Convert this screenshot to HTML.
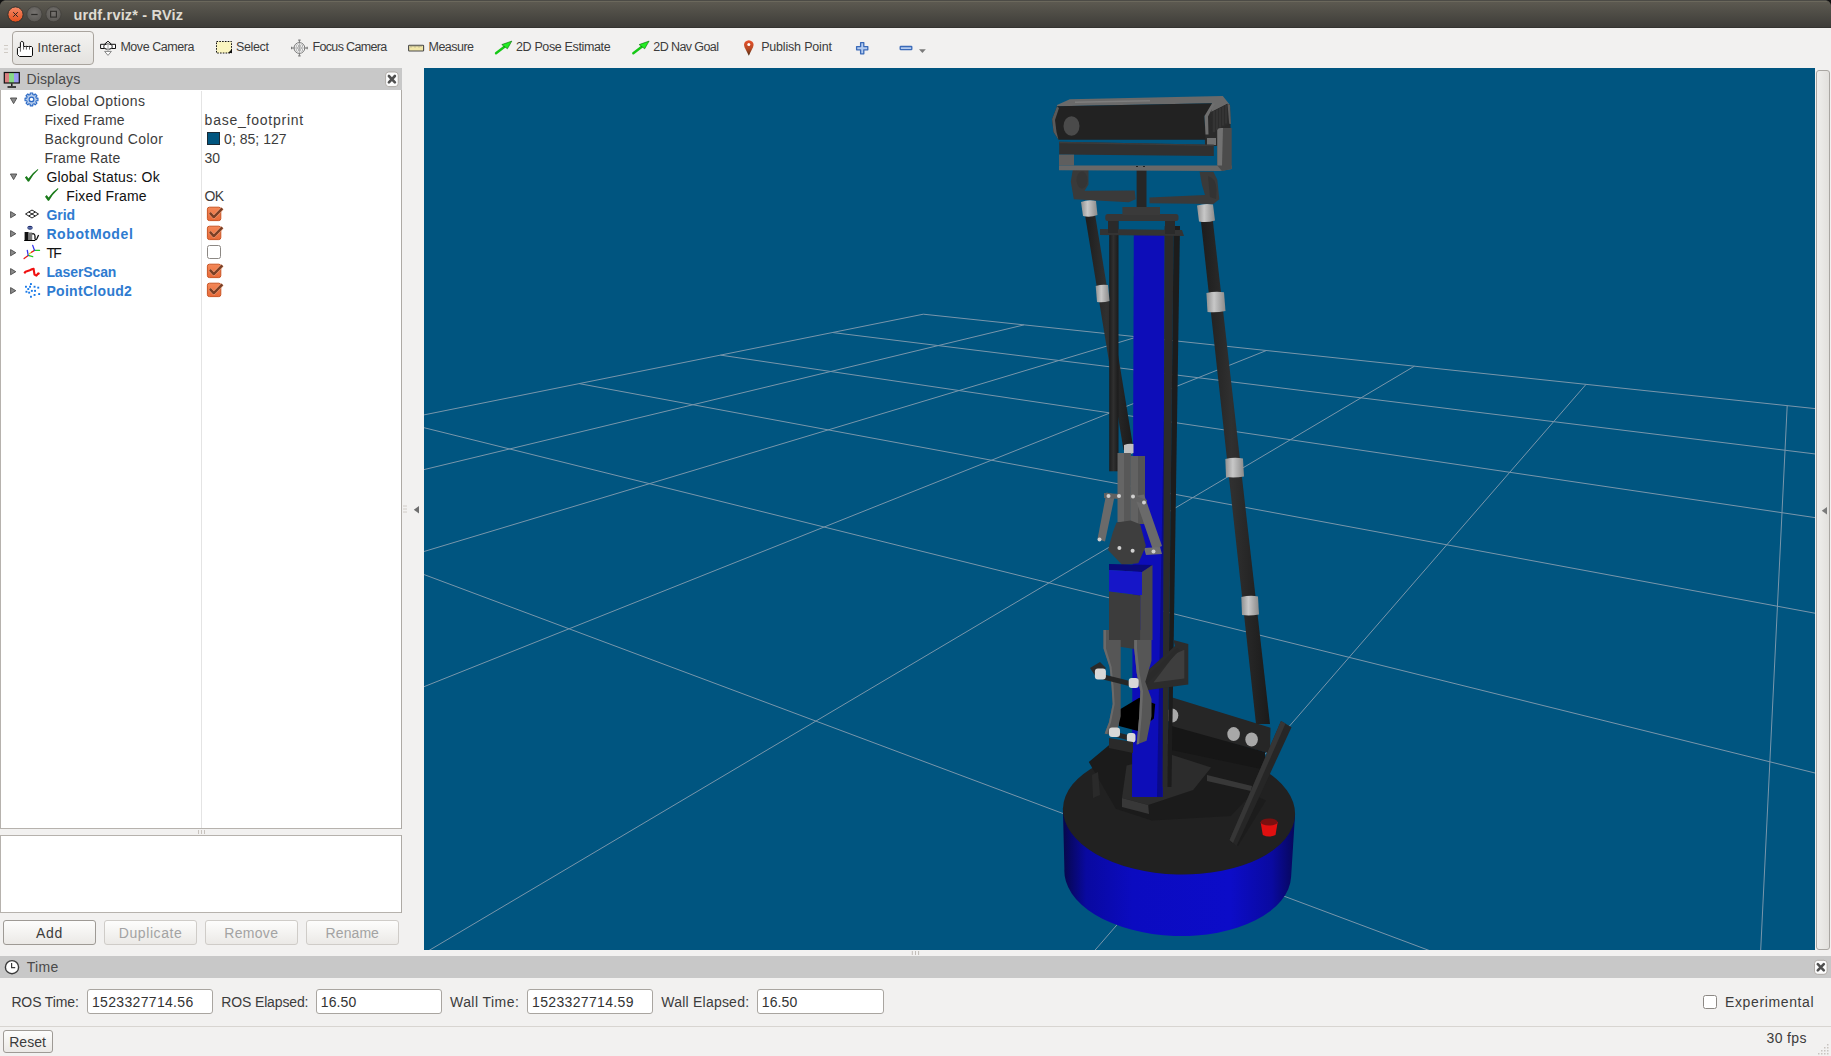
<!DOCTYPE html><html><head><meta charset="utf-8"><style>
html,body{margin:0;padding:0;}
body{width:1831px;height:1056px;position:relative;overflow:hidden;background:#f2f1f0;font-family:"Liberation Sans",sans-serif;}
.t{position:absolute;white-space:nowrap;line-height:1;}
.b{position:absolute;box-sizing:border-box;}
svg{position:absolute;}
</style></head><body>
<div class="b" style="left:0px;top:0px;width:1831px;height:28px;background:linear-gradient(#5d5a51 5%,#3e3d39 95%,#2f2e2b 100%);"></div>
<div class="b" style="left:0px;top:0px;width:1831px;height:1px;background:#4c4b46;"></div>
<svg style="left:0;top:0" width="1831" height="28"><path d="M0 0 H5 Q1 1 0 5Z" fill="#111"/><path d="M1831 0 H1826 Q1830 1 1831 5Z" fill="#111"/><path d="M4 1.5 H1827" stroke="#6b685c" stroke-width="1"/></svg>
<svg style="left:0;top:0" width="70" height="28">
<defs><linearGradient id="rc" x1="0" y1="0" x2="0" y2="1"><stop offset="0" stop-color="#f58a68"/><stop offset="1" stop-color="#e54f1c"/></linearGradient>
<radialGradient id="gc" cx="50%" cy="40%" r="60%"><stop offset="0" stop-color="#767370"/><stop offset="1" stop-color="#5a5854"/></radialGradient></defs>
<circle cx="15.5" cy="14.5" r="7.6" fill="url(#rc)" stroke="#2e2c28" stroke-width="0.9"/>
<path d="M13.2 12.2 L17.8 16.8 M17.8 12.2 L13.2 16.8" stroke="#2a2420" stroke-width="1"/>
<circle cx="34.4" cy="14.2" r="7.6" fill="url(#gc)" stroke="#3a3935" stroke-width="0.6"/>
<path d="M31.2 14.5 H37.6" stroke="#2e2d2a" stroke-width="1.2"/>
<circle cx="53.5" cy="14.2" r="7.6" fill="url(#gc)" stroke="#3a3935" stroke-width="0.6"/>
<rect x="50.6" y="11.3" width="5.8" height="5.8" fill="none" stroke="#2e2d2a" stroke-width="1.1"/>
</svg>
<div class="t" style="left:73.40px;top:7.63px;font-size:14.5px;letter-spacing:0.191px;color:#dfdbd2;font-weight:bold;">urdf.rviz* - RViz</div>
<div class="b" style="left:0px;top:28px;width:1831px;height:40px;background:#f2f1f0;"></div>
<svg style="left:0;top:28" width="12" height="40"><path d="M4 17.5H8M4 21H8M4 24.5H8" stroke="#cfcac4" stroke-width="1"/></svg>
<div class="b" style="left:12px;top:31px;width:82px;height:34px;border:1px solid #a9a49e;border-radius:4px;background:linear-gradient(#f4f3f1,#e4e2df);"></div>
<div class="t" style="left:37.50px;top:42.22px;font-size:12.5px;letter-spacing:0.186px;color:#3c3c3c;font-weight:normal;">Interact</div>
<div class="t" style="left:120.40px;top:41.32px;font-size:12.5px;letter-spacing:-0.455px;color:#3c3c3c;font-weight:normal;">Move Camera</div>
<div class="t" style="left:235.90px;top:41.32px;font-size:12.5px;letter-spacing:-0.330px;color:#3c3c3c;font-weight:normal;">Select</div>
<div class="t" style="left:312.50px;top:41.32px;font-size:12.5px;letter-spacing:-0.664px;color:#3c3c3c;font-weight:normal;">Focus Camera</div>
<div class="t" style="left:428.50px;top:41.32px;font-size:12.5px;letter-spacing:-0.525px;color:#3c3c3c;font-weight:normal;">Measure</div>
<div class="t" style="left:516.00px;top:41.32px;font-size:12.5px;letter-spacing:-0.357px;color:#3c3c3c;font-weight:normal;">2D Pose Estimate</div>
<div class="t" style="left:653.30px;top:41.32px;font-size:12.5px;letter-spacing:-0.595px;color:#3c3c3c;font-weight:normal;">2D Nav Goal</div>
<div class="t" style="left:761.20px;top:41.32px;font-size:12.5px;letter-spacing:-0.188px;color:#3c3c3c;font-weight:normal;">Publish Point</div>
<svg style="left:0;top:28" width="940" height="40">
<!-- hand -->
<g transform="translate(0,-28)">
<path d="M17.45 54.6 V48.5 L18.4 47.4 H20.4 V42.4 L21.8 41.3 L23.6 42.4 V46.5 H25.4 L26 46.2 L27 46.5 H28.5 L29 46.2 L30 46.5 H31.5 L32.5 47.6 V55.5 L31.3 56.5 H19.5 Z" fill="#fff" stroke="#0a0a0a" stroke-width="1" stroke-linejoin="round"/>
<path d="M20.4 47.4 V51.7 M23.6 46.5 V49.6 M26.4 46.7 V49.6 M29.5 46.7 V49.6" stroke="#333" stroke-width="0.8"/>
</g>
<!-- move camera -->
<g fill="#fff" stroke="#111" stroke-width="1">
<path d="M100.6 16.3 h4.2 v4.2 h-4.2z"/><path d="M111.3 16.3 h4.2 v4.2 h-4.2z"/>
<path d="M104.2 16.5 L108 13.2 L111.8 16.5"/>
<ellipse cx="108" cy="18.6" rx="4.2" ry="2.6"/>
</g>
<path d="M108 16 v8" stroke="#bbb" stroke-width="1.4"/>
<path d="M104.6 23.4 h6.8 l-3.4 4z" fill="#fff" stroke="#888" stroke-width="1"/>
<!-- select -->
<rect x="216.5" y="13.5" width="15" height="11.5" fill="#fbf5c0" stroke="#111" stroke-width="1" stroke-dasharray="1.6 1.2"/>
<path d="M228 25 L232 25 L232 21z" fill="#111"/>
<!-- focus camera -->
<g fill="none" stroke="#7a7a7a" stroke-width="1">
<circle cx="299.4" cy="20" r="5.4" fill="#fafafa"/>
<path d="M299.4 12.2 v3.2 M299.4 24.6 v3.2 M291.6 20 h3.2 M304 20 h3.2"/>
<path d="M299.4 15.6 v8.8 M295 20 h8.8" stroke="#999" stroke-width="0.8"/>
<circle cx="297.4" cy="18" r="1.3" stroke="#999" stroke-width="0.7"/><circle cx="301.4" cy="18" r="1.3" stroke="#999" stroke-width="0.7"/><circle cx="297.4" cy="22" r="1.3" stroke="#999" stroke-width="0.7"/><circle cx="301.4" cy="22" r="1.3" stroke="#999" stroke-width="0.7"/>
</g>
<path d="M298.2 12.2 h2.4 M298.2 27.8 h2.4 M291.6 18.8 v2.4 M307.2 18.8 v2.4" stroke="#7a7a7a" stroke-width="1.2"/>
<!-- measure -->
<rect x="408.6" y="17.2" width="15" height="5.8" rx="0.8" fill="#f1e6a8" stroke="#4a4a4a" stroke-width="1.1"/>
<path d="M411 17.6v1.8M413 17.6v1.2M415 17.6v1.8M417 17.6v1.2M419 17.6v1.8M421 17.6v1.2" stroke="#666" stroke-width="0.7"/>
<!-- 2D pose -->
<path d="M496 25.3 L504.5 18.7" stroke="#16c816" stroke-width="2.4" stroke-linecap="round"/><path d="M511.8 13.1 L501.8 16.6 L507.4 20.8 Z" fill="#22ee22" stroke="#0a6a0a" stroke-width="0.6" stroke-linejoin="round"/>
<path d="M633.3 25.3 L641.8 18.7" stroke="#16c816" stroke-width="2.4" stroke-linecap="round"/><path d="M649.1 13.1 L639.1 16.6 L644.7 20.8 Z" fill="#22ee22" stroke="#0a6a0a" stroke-width="0.6" stroke-linejoin="round"/>
<!-- publish point -->
<defs><linearGradient id="pin" x1="0" y1="0" x2="0" y2="1"><stop offset="0" stop-color="#e8502a"/><stop offset="0.55" stop-color="#b84a25"/><stop offset="1" stop-color="#4a2a12"/></linearGradient></defs>
<path d="M748.8 27.8 l-4.2-8.6 q-1.4-3.2 0.6-5.4 q3.6-3.2 7.2 0 q2 2.2 0.6 5.4z" fill="url(#pin)"/>
<circle cx="748.8" cy="16.6" r="1.5" fill="#fff"/>
<!-- plus -->
<path d="M860.6 14.6 h3.2 v4 h4 v3.2 h-4 v4 h-3.2 v-4 h-4 v-3.2 h4z" fill="#b4cbef" stroke="#3a6ab8" stroke-width="1.3" stroke-linejoin="round"/>
<!-- minus -->
<rect x="900.2" y="18.5" width="11.6" height="3.2" rx="0.6" fill="#b4cbef" stroke="#3a6ab8" stroke-width="1.3"/>
<path d="M919 21.2 h6.8 l-3.4 3.8z" fill="#7a7a7a"/>
</g>
</svg>
<div class="b" style="left:0px;top:68px;width:402px;height:23px;background:#c8c8c8;"></div>
<div class="t" style="left:26.50px;top:71.75px;font-size:14px;letter-spacing:0.114px;color:#4a4a4a;font-weight:normal;">Displays</div>
<svg style="left:0;top:68" width="402" height="23">
<defs><linearGradient id="mon" x1="0" x2="1"><stop offset="0" stop-color="#d98080"/><stop offset="0.33" stop-color="#d98080"/><stop offset="0.33" stop-color="#88d888"/><stop offset="0.66" stop-color="#88d888"/><stop offset="0.66" stop-color="#9a9af0"/><stop offset="1" stop-color="#9a9af0"/></linearGradient></defs>
<rect x="4.3" y="4.5" width="15" height="10.5" fill="url(#mon)" stroke="#111" stroke-width="1.2"/>
<path d="M11.8 15.5 v2.5 M7.5 19 h8.5" stroke="#111" stroke-width="1.4"/>
<rect x="385.6" y="4" width="12.6" height="14.6" rx="3.2" fill="#fcfcfc" stroke="#aaa6a2" stroke-width="0.9"/>
<path d="M388.9 8 l6 6.4 M394.9 8 l-6 6.4" stroke="#505050" stroke-width="2.6" stroke-linecap="round"/>
</svg>
<div class="b" style="left:0px;top:90px;width:402px;height:739px;background:#fff;border:1px solid #b6b2ad;border-top:none;"></div>
<div class="b" style="left:201px;top:91px;width:1px;height:737px;background:#e4e4e4;"></div>
<div class="t" style="left:46.40px;top:94.05px;font-size:14px;letter-spacing:0.454px;color:#3c3c3c;font-weight:normal;">Global Options</div>
<div class="t" style="left:44.40px;top:113.05px;font-size:14px;letter-spacing:0.165px;color:#3c3c3c;font-weight:normal;">Fixed Frame</div>
<div class="t" style="left:44.40px;top:132.05px;font-size:14px;letter-spacing:0.423px;color:#3c3c3c;font-weight:normal;">Background Color</div>
<div class="t" style="left:44.40px;top:151.05px;font-size:14px;letter-spacing:0.211px;color:#3c3c3c;font-weight:normal;">Frame Rate</div>
<div class="t" style="left:46.40px;top:170.05px;font-size:14px;letter-spacing:0.222px;color:#111111;font-weight:normal;">Global Status: Ok</div>
<div class="t" style="left:66.30px;top:189.05px;font-size:14px;letter-spacing:0.165px;color:#111111;font-weight:normal;">Fixed Frame</div>
<div class="t" style="left:46.40px;top:208.05px;font-size:14px;letter-spacing:-0.033px;color:#2e7bd0;font-weight:bold;">Grid</div>
<div class="t" style="left:46.40px;top:227.05px;font-size:14px;letter-spacing:0.617px;color:#2e7bd0;font-weight:bold;">RobotModel</div>
<div class="t" style="left:46.40px;top:246.05px;font-size:14px;letter-spacing:-1.600px;color:#111111;font-weight:normal;">TF</div>
<div class="t" style="left:46.40px;top:265.05px;font-size:14px;letter-spacing:-0.100px;color:#2e7bd0;font-weight:bold;">LaserScan</div>
<div class="t" style="left:46.40px;top:284.05px;font-size:14px;letter-spacing:0.305px;color:#2e7bd0;font-weight:bold;">PointCloud2</div>
<div class="t" style="left:204.60px;top:113.05px;font-size:14px;letter-spacing:0.758px;color:#3c3c3c;font-weight:normal;">base_footprint</div>
<div class="t" style="left:224.10px;top:132.05px;font-size:14px;letter-spacing:0.022px;color:#3c3c3c;font-weight:normal;">0; 85; 127</div>
<div class="t" style="left:204.60px;top:151.05px;font-size:14px;letter-spacing:-0.050px;color:#3c3c3c;font-weight:normal;">30</div>
<div class="t" style="left:204.60px;top:189.05px;font-size:14px;letter-spacing:-0.750px;color:#3c3c3c;font-weight:normal;">OK</div>
<div class="b" style="left:207px;top:132px;width:13px;height:13px;background:#00557f;border:1px solid #1a2a35;"></div>
<svg style="left:0;top:90" width="230" height="220"><path d="M10.4 7.999999999999995 h6.4 l-3.2 5.6z" fill="#8a8a8a" stroke="#4a4a4a" stroke-width="0.9" stroke-linejoin="round"/><path d="M10.4 84.0 h6.4 l-3.2 5.6z" fill="#8a8a8a" stroke="#4a4a4a" stroke-width="0.9" stroke-linejoin="round"/><path d="M10.6 121.6 v6.2 l5.2-3.1z" fill="#8a8a8a" stroke="#4a4a4a" stroke-width="0.9" stroke-linejoin="round"/><path d="M10.6 140.6 v6.2 l5.2-3.1z" fill="#8a8a8a" stroke="#4a4a4a" stroke-width="0.9" stroke-linejoin="round"/><path d="M10.6 159.6 v6.2 l5.2-3.1z" fill="#8a8a8a" stroke="#4a4a4a" stroke-width="0.9" stroke-linejoin="round"/><path d="M10.6 178.60000000000002 v6.2 l5.2-3.1z" fill="#8a8a8a" stroke="#4a4a4a" stroke-width="0.9" stroke-linejoin="round"/><path d="M10.6 197.60000000000002 v6.2 l5.2-3.1z" fill="#8a8a8a" stroke="#4a4a4a" stroke-width="0.9" stroke-linejoin="round"/><g transform="translate(31.5,9.4)"><path d="M4.83 -1.29 L6.47 -1.31 L6.47 1.31 L4.83 1.29 L4.33 2.51 L5.50 3.65 L3.65 5.50 L2.51 4.33 L1.29 4.83 L1.31 6.47 L-1.31 6.47 L-1.29 4.83 L-2.51 4.33 L-3.65 5.50 L-5.50 3.65 L-4.33 2.51 L-4.83 1.29 L-6.47 1.31 L-6.47 -1.31 L-4.83 -1.29 L-4.33 -2.51 L-5.50 -3.65 L-3.65 -5.50 L-2.51 -4.33 L-1.29 -4.83 L-1.31 -6.47 L1.31 -6.47 L1.29 -4.83 L2.51 -4.33 L3.65 -5.50 L5.50 -3.65 L4.33 -2.51Z" fill="#b4cbeb" stroke="#2a68c4" stroke-width="1.1" stroke-linejoin="round"/><circle r="2.3" fill="#fff" stroke="#2a68c4" stroke-width="1.2"/></g><path transform="translate(0,-90)" d="M24.9 177.6 L26.6 176 L28.5 178.4 Q32 173 37.9 169 L38.3 169.8 Q32.5 175 29.1 181.4 L28 181.8 Z" fill="#1a7a1a"/><path transform="translate(20.1,-70.9)" d="M24.9 177.6 L26.6 176 L28.5 178.4 Q32 173 37.9 169 L38.3 169.8 Q32.5 175 29.1 181.4 L28 181.8 Z" fill="#1a7a1a"/><g transform="translate(32,124)" fill="none" stroke="#222" stroke-width="1"><path d="M-6.5 0 L0 -4 L6.5 0 L0 4z"/><path d="M-3.25 -2 L3.25 2 M3.25 -2 L-3.25 2"/></g><g transform="translate(0,-90)"><ellipse cx="30" cy="227.8" rx="2.7" ry="2" fill="#1a2a6a"/><rect x="27.5" y="227.4" width="5" height="1" fill="#8899cc"/><path d="M24.6 232 h4 v9 h-4z" fill="#111"/><path d="M28.6 232.5 h3.6 v8.5 h-3.6z" fill="#777"/><path d="M32 234 q2.5-1 3 2 v3 q1 1.5 2-0.5 l1.6-3.5" fill="none" stroke="#111" stroke-width="1.3"/><path d="M24.3 240.5 h11" stroke="#000" stroke-width="1"/></g><g transform="translate(0,-90)" fill="none" stroke-width="1.3" stroke-linecap="round"><path d="M24.1 258.5 L28.2 255.4" stroke="#e81818"/><path d="M28.2 255.4 L32.7 256.7" stroke="#22cc22"/><path d="M27.3 250.4 L28.2 255.4" stroke="#3333ee"/><path d="M29.1 254 L31.5 252.2" stroke="#dddd22"/><path d="M31.5 252.2 L34.5 250.4" stroke="#e81818"/><path d="M34.5 250.4 L39.5 250.4" stroke="#22cc22"/><path d="M32.7 245.4 L34.5 250.4" stroke="#3333ee"/></g><path transform="translate(0,-90)" d="M24.3 273.3 L25.5 271.7 L29.1 270.6 L31.8 269.2 L33.6 268.8 L34.5 274.6 L36.4 275.6 L38.2 273.3 L39.5 274" fill="none" stroke="#f01010" stroke-width="2.1" stroke-linejoin="round"/><rect x="30.0" y="193.1" width="1.9" height="1.9" fill="#1a7ae8"/><rect x="25.0" y="195.8" width="1.9" height="1.9" fill="#1a7ae8"/><rect x="29.1" y="195.8" width="1.9" height="1.9" fill="#1a7ae8"/><rect x="33.6" y="195.8" width="1.9" height="1.9" fill="#1a7ae8"/><rect x="37.3" y="196.7" width="1.9" height="1.9" fill="#1a7ae8"/><rect x="27.3" y="198.1" width="1.9" height="1.9" fill="#1a7ae8"/><rect x="30.9" y="199.9" width="1.9" height="1.9" fill="#1a7ae8"/><rect x="34.1" y="199.9" width="1.9" height="1.9" fill="#1a7ae8"/><rect x="25.5" y="200.8" width="1.9" height="1.9" fill="#1a7ae8"/><rect x="28.2" y="201.7" width="1.9" height="1.9" fill="#1a7ae8"/><rect x="33.6" y="204.0" width="1.9" height="1.9" fill="#1a7ae8"/><rect x="38.2" y="203.1" width="1.9" height="1.9" fill="#1a7ae8"/><rect x="30.0" y="205.8" width="1.9" height="1.9" fill="#1a7ae8"/></svg>
<svg style="left:206px;top:206.1px" width="19" height="17"><defs><linearGradient id="cbg" x1="0" y1="0" x2="0" y2="1"><stop offset="0" stop-color="#f48858"/><stop offset="1" stop-color="#e86a38"/></linearGradient></defs><rect x="1.4" y="1.2" width="13.4" height="13.4" rx="2" fill="url(#cbg)" stroke="#c95424" stroke-width="1"/><path d="M3.9 6.9 L7.8 11.1 L16.4 2.4" fill="none" stroke="#f7b192" stroke-width="3.6" stroke-linejoin="round" opacity="0.7"/><path d="M3.9 6.9 L7.8 11.1 L16.4 2.4" fill="none" stroke="#7a3f25" stroke-width="2.4" stroke-linejoin="round"/></svg>
<svg style="left:206px;top:225.1px" width="19" height="17"><defs><linearGradient id="cbg" x1="0" y1="0" x2="0" y2="1"><stop offset="0" stop-color="#f48858"/><stop offset="1" stop-color="#e86a38"/></linearGradient></defs><rect x="1.4" y="1.2" width="13.4" height="13.4" rx="2" fill="url(#cbg)" stroke="#c95424" stroke-width="1"/><path d="M3.9 6.9 L7.8 11.1 L16.4 2.4" fill="none" stroke="#f7b192" stroke-width="3.6" stroke-linejoin="round" opacity="0.7"/><path d="M3.9 6.9 L7.8 11.1 L16.4 2.4" fill="none" stroke="#7a3f25" stroke-width="2.4" stroke-linejoin="round"/></svg>
<svg style="left:206px;top:244.1px" width="18" height="17"><rect x="1.5" y="1.5" width="13" height="13" rx="2" fill="#fff" stroke="#8c8884" stroke-width="1"/></svg>
<svg style="left:206px;top:263.1px" width="19" height="17"><defs><linearGradient id="cbg" x1="0" y1="0" x2="0" y2="1"><stop offset="0" stop-color="#f48858"/><stop offset="1" stop-color="#e86a38"/></linearGradient></defs><rect x="1.4" y="1.2" width="13.4" height="13.4" rx="2" fill="url(#cbg)" stroke="#c95424" stroke-width="1"/><path d="M3.9 6.9 L7.8 11.1 L16.4 2.4" fill="none" stroke="#f7b192" stroke-width="3.6" stroke-linejoin="round" opacity="0.7"/><path d="M3.9 6.9 L7.8 11.1 L16.4 2.4" fill="none" stroke="#7a3f25" stroke-width="2.4" stroke-linejoin="round"/></svg>
<svg style="left:206px;top:282.1px" width="19" height="17"><defs><linearGradient id="cbg" x1="0" y1="0" x2="0" y2="1"><stop offset="0" stop-color="#f48858"/><stop offset="1" stop-color="#e86a38"/></linearGradient></defs><rect x="1.4" y="1.2" width="13.4" height="13.4" rx="2" fill="url(#cbg)" stroke="#c95424" stroke-width="1"/><path d="M3.9 6.9 L7.8 11.1 L16.4 2.4" fill="none" stroke="#f7b192" stroke-width="3.6" stroke-linejoin="round" opacity="0.7"/><path d="M3.9 6.9 L7.8 11.1 L16.4 2.4" fill="none" stroke="#7a3f25" stroke-width="2.4" stroke-linejoin="round"/></svg>
<svg style="left:196;top:828" width="12" height="8"><path d="M2.5 2 v4 M5.5 2 v4 M8.5 2 v4" stroke="#c8c3be" stroke-width="1"/></svg>
<div class="b" style="left:0px;top:835px;width:402px;height:78px;background:#fff;border:1px solid #b6b2ad;"></div>
<div class="b" style="left:3px;top:920px;width:93px;height:25px;border:1px solid #9e9a95;border-radius:3px;background:linear-gradient(#fdfdfc,#ebe9e6);"></div>
<div class="t" style="left:36.00px;top:925.75px;font-size:14px;letter-spacing:0.700px;color:#3c3c3c;font-weight:normal;">Add</div>
<div class="b" style="left:104px;top:920px;width:93px;height:25px;border:1px solid #cfccc8;border-radius:3px;background:linear-gradient(#fdfdfc,#ebe9e6);"></div>
<div class="t" style="left:118.80px;top:925.75px;font-size:14px;letter-spacing:0.581px;color:#a3a3a3;font-weight:normal;">Duplicate</div>
<div class="b" style="left:205px;top:920px;width:93px;height:25px;border:1px solid #cfccc8;border-radius:3px;background:linear-gradient(#fdfdfc,#ebe9e6);"></div>
<div class="t" style="left:224.20px;top:925.75px;font-size:14px;letter-spacing:0.330px;color:#a3a3a3;font-weight:normal;">Remove</div>
<div class="b" style="left:306px;top:920px;width:93px;height:25px;border:1px solid #cfccc8;border-radius:3px;background:linear-gradient(#fdfdfc,#ebe9e6);"></div>
<div class="t" style="left:325.60px;top:925.75px;font-size:14px;letter-spacing:0.080px;color:#a3a3a3;font-weight:normal;">Rename</div>
<div class="b" style="left:401px;top:90px;width:1px;height:739px;background:#aeaaa5;"></div>
<div class="b" style="left:401px;top:835px;width:1px;height:78px;background:#aeaaa5;"></div>
<svg style="left:400;top:500" width="24" height="20"><path d="M403 6h4M403 9h4M403 12h4" transform="translate(-400,0)" stroke="#cdc8c2" stroke-width="0.9"/><path d="M19 6 v7.4 l-5.2-3.7z" fill="#6e6e6e"/></svg>
<div class="b" style="left:1815px;top:68px;width:16px;height:882px;background:#f2f1f0;"></div>
<div class="b" style="left:1816px;top:70px;width:14px;height:880px;border:1px solid #a9a6a2;border-radius:3px;background:linear-gradient(90deg,#efeeec,#e2e0dd);"></div>
<svg style="left:1816;top:500" width="15" height="20"><path d="M11 7 v7.4 l-5.2-3.7z" fill="#7a7a7a"/></svg>
<svg style="left:908px;top:948px" width="14" height="9"><path d="M4.3 3 v4 M7.5 3 v4 M10.6 3 v4" stroke="#c2bdb8" stroke-width="1"/></svg>
<div class="b" style="left:0px;top:956px;width:1831px;height:22px;background:#c8c8c8;"></div>
<svg style="left:0;top:956" width="30" height="22"><circle cx="12" cy="11.2" r="6.6" fill="#fff" stroke="#3a3a3a" stroke-width="1.4"/><path d="M11.6 7 v4.6 h3.6" fill="none" stroke="#3a3a3a" stroke-width="1.2"/></svg>
<div class="t" style="left:26.70px;top:960.25px;font-size:14px;letter-spacing:0.300px;color:#4a4a4a;font-weight:normal;">Time</div>
<svg style="left:1810;top:956" width="21" height="22"><rect x="4.5" y="4.3" width="12.6" height="14" rx="3.2" fill="#fcfcfc" stroke="#aaa6a2" stroke-width="0.9"/><path d="M7.8 8.2 l6 6.2 M13.8 8.2 l-6 6.2" stroke="#505050" stroke-width="2.6" stroke-linecap="round"/></svg>
<div class="t" style="left:11.40px;top:995.45px;font-size:14px;letter-spacing:-0.131px;color:#3c3c3c;font-weight:normal;">ROS Time:</div>
<div class="t" style="left:221.30px;top:995.45px;font-size:14px;letter-spacing:-0.145px;color:#3c3c3c;font-weight:normal;">ROS Elapsed:</div>
<div class="t" style="left:450.00px;top:995.45px;font-size:14px;letter-spacing:0.444px;color:#3c3c3c;font-weight:normal;">Wall Time:</div>
<div class="t" style="left:661.30px;top:995.45px;font-size:14px;letter-spacing:0.221px;color:#3c3c3c;font-weight:normal;">Wall Elapsed:</div>
<div class="b" style="left:87px;top:989px;width:126px;height:25px;background:#fff;border:1px solid #a9a5a0;border-radius:3px;"></div>
<div class="t" style="left:92.00px;top:995.45px;font-size:14px;letter-spacing:0.325px;color:#333;font-weight:normal;">1523327714.56</div>
<div class="b" style="left:316px;top:989px;width:126px;height:25px;background:#fff;border:1px solid #a9a5a0;border-radius:3px;"></div>
<div class="t" style="left:320.80px;top:995.45px;font-size:14px;letter-spacing:0.113px;color:#333;font-weight:normal;">16.50</div>
<div class="b" style="left:527px;top:989px;width:126px;height:25px;background:#fff;border:1px solid #a9a5a0;border-radius:3px;"></div>
<div class="t" style="left:532.00px;top:995.45px;font-size:14px;letter-spacing:0.350px;color:#333;font-weight:normal;">1523327714.59</div>
<div class="b" style="left:757px;top:989px;width:127px;height:25px;background:#fff;border:1px solid #a9a5a0;border-radius:3px;"></div>
<div class="t" style="left:761.80px;top:995.45px;font-size:14px;letter-spacing:0.113px;color:#333;font-weight:normal;">16.50</div>
<svg style="left:1702;top:994" width="16" height="16"><rect x="1.5" y="1.5" width="13" height="13" rx="2" fill="#fff" stroke="#8c8884" stroke-width="1"/></svg>
<div class="t" style="left:1725.00px;top:994.95px;font-size:14px;letter-spacing:0.627px;color:#3c3c3c;font-weight:normal;">Experimental</div>
<div class="b" style="left:0px;top:1026px;width:1831px;height:1px;background:#d8d5d1;"></div>
<div class="b" style="left:3px;top:1030px;width:50px;height:23px;border:1px solid #9e9a95;border-radius:3px;background:linear-gradient(#fdfdfc,#ebe9e6);"></div>
<div class="t" style="left:9.20px;top:1034.65px;font-size:14px;letter-spacing:0.062px;color:#3c3c3c;font-weight:normal;">Reset</div>
<div class="t" style="left:1766.60px;top:1030.55px;font-size:14px;letter-spacing:0.330px;color:#3c3c3c;font-weight:normal;">30 fps</div>
<svg style="left:1815;top:1040" width="16" height="16"><g fill="#c8c4bf"><rect x="12" y="4" width="1.5" height="1.5"/><rect x="9" y="7" width="1.5" height="1.5"/><rect x="12" y="7" width="1.5" height="1.5"/><rect x="6" y="10" width="1.5" height="1.5"/><rect x="9" y="10" width="1.5" height="1.5"/><rect x="12" y="10" width="1.5" height="1.5"/><rect x="3" y="13" width="1.5" height="1.5"/><rect x="6" y="13" width="1.5" height="1.5"/><rect x="9" y="13" width="1.5" height="1.5"/><rect x="12" y="13" width="1.5" height="1.5"/></g></svg>
<svg style="left:424px;top:68px" width="1391" height="882" viewBox="424 68 1391 882">
<rect x="424" y="68" width="1391" height="882" fill="#005580"/>
<g transform="translate(424,68)"><path d="M499.3 246.2L-2.0 347.3M499.3 246.2L1393.0 340.8M599.9 256.9L-2.0 402.1M408.4 264.5L1393.0 386.2M713.3 268.9L-2.0 484.1M296.4 287.1L1393.0 449.9M842.4 282.5L-2.0 619.5M155.1 315.6L1393.0 545.6M990.4 298.2L2.4 884.0M-2.0 359.2L1393.0 705.5M1162.0 316.4L669.4 884.0M-2.0 505.8L1009.3 884.0M1363.2 337.7L1336.6 884.0" stroke="#7896ab" stroke-width="1" fill="none"/></g>
<defs>
<linearGradient id="cyl" x1="0" x2="1"><stop offset="0" stop-color="#07074a"/><stop offset="0.1" stop-color="#0909a0"/><stop offset="0.3" stop-color="#0b0bc0"/><stop offset="0.72" stop-color="#0c0cc8"/><stop offset="0.9" stop-color="#0a0aa0"/><stop offset="1" stop-color="#07075a"/></linearGradient>
<linearGradient id="pl" x1="0" x2="1"><stop offset="0" stop-color="#1c1c1c"/><stop offset="0.45" stop-color="#303030"/><stop offset="1" stop-color="#1a1a1a"/></linearGradient>
<linearGradient id="ring" x1="0" x2="1"><stop offset="0" stop-color="#909090"/><stop offset="0.4" stop-color="#c8c8c8"/><stop offset="1" stop-color="#8a8a8a"/></linearGradient>
</defs>
<!-- right diagonal pole (behind base bracket) -->
<path d="M1200 213 L1212 213 L1270 724 L1256 724 Z" fill="url(#pl)"/>
<!-- base cylinder -->
<path d="M1062.9 808.2 L1064.4 869 A113.4 63 1.5 0 0 1291.1 877 L1295.1 814 Z" fill="url(#cyl)"/>
<ellipse cx="1179" cy="811.5" rx="116.1" ry="63" transform="rotate(1.5 1179 811.5)" fill="#212121"/>
<!-- platform -->
<path d="M1088.8 762 L1115.8 808.7 L1151.8 820.4 L1230.9 816 L1257.9 787.2 L1265.1 753 L1212.9 740.4 L1168 729.6 L1132 749.4 L1110.4 744 Z" fill="#1b1b1b"/>
<path d="M1092 775 L1098 772 L1100 795 L1093 798 Z" fill="#2a2a2a"/>
<!-- laser bracket -->
<path d="M1171.5 697.2 L1270.5 727.8 L1270 753.5 L1171.5 727.5 Z" fill="#262626"/>
<path d="M1171.5 726 L1265 752 L1266 770 L1171.5 750 Z" fill="#161616"/>
<path d="M1207 775 L1252 786 L1251 791 L1207 781 Z" fill="#383838"/>
<ellipse cx="1172" cy="715.5" rx="6.3" ry="7" fill="#a8a8a8"/>
<ellipse cx="1233.6" cy="734.1" rx="6.3" ry="7" fill="#a8a8a8"/>
<ellipse cx="1251.6" cy="739.5" rx="6.3" ry="7" fill="#a8a8a8"/>
<!-- column base block -->
<path d="M1122 798 L1148.2 805.1 L1193.1 789.9 L1211.1 767.4 L1171.5 754.8 L1126.6 765.6 Z" fill="#2c2c2c"/>
<path d="M1122 798 L1148.2 805.1 L1149 814 L1122 807 Z" fill="#383838"/>
<!-- right slanted bars -->
<path d="M1258 797 L1266 800.5 L1238 846 L1231 842 Z" fill="#1c1c1c"/>
<path d="M1281 721 L1291.5 727.3 L1236.5 846 L1229.5 840 Z" fill="#262626"/>
<path d="M1281 721 L1285.5 723.5 L1233 843 L1229.5 840 Z" fill="#363636"/>
<!-- red button -->
<path d="M1260.6 822 L1277.7 822 L1275.5 835 Q1269 838 1262.8 835 Z" fill="#e01010"/>
<ellipse cx="1269.1" cy="822" rx="8.5" ry="3.6" fill="#7a1010"/>
<!-- left diagonal pole -->
<path d="M1084 209 L1094 208 L1133.5 449 L1123.5 450 Z" fill="url(#pl)"/>
<!-- left vertical pole -->
<rect x="1109.2" y="219" width="9.3" height="252.3" fill="url(#pl)"/>
<!-- blue column -->
<path d="M1133.8 233 L1164.6 233 L1162.6 797 L1132 797 Z" fill="#0d0db8"/>
<path d="M1164.6 380 L1162.6 797 L1157 797 Z" fill="#0a0a88"/>
<!-- right pole -->
<path d="M1164.6 226 L1173.7 226 L1167.5 787 L1162.6 787 Z" fill="#2b2b2b"/>
<path d="M1173.7 226 L1180 226 L1171.5 787 L1167.5 787 Z" fill="#1c1c1c"/>
<!-- top plates -->
<path d="M1100 229 L1182 230 L1184 236 L1100 235 Z" fill="#333"/>
<rect x="1108" y="219" width="10" height="14" fill="#2a2a2a"/>
<rect x="1165" y="220" width="10" height="14" fill="#2a2a2a"/>
<rect x="1105.3" y="214" width="73.2" height="7" rx="2.5" fill="#363636"/>
<rect x="1122.4" y="207" width="37.6" height="8" fill="#3a3a3a"/>
<rect x="1136.6" y="170" width="9.9" height="37" fill="#262626"/>
<!-- hinges + arm plates -->
<path d="M1072.8 169.8 L1088.5 169.8 L1088.5 184.6 L1084.6 190.8 L1134.7 190.5 L1135.7 199.3 L1128.8 202.3 L1073.8 199.3 L1070.8 181.6 Z" fill="#3a3a3a"/>
<ellipse cx="1082" cy="180" rx="5.5" ry="8.5" fill="#353535"/>
<path d="M1199.6 171.8 L1213.4 171.8 L1217.3 179.7 L1219.3 199.3 L1213.4 204 L1149.5 203.3 L1149.5 197.4 L1205 195 L1202 185 Z" fill="#3a3a3a"/>
<path d="M1208 176 Q1216 178 1216.5 190 L1216 199 L1210 197 Z" fill="#333"/>
<!-- rings -->
<path d="M1081 202 Q1088.5 199 1096 201 L1097.5 215 Q1090 218 1083 216 Z" fill="url(#ring)"/>
<path d="M1197 205.5 Q1205 203 1213 204.5 L1215 220.5 Q1207 223 1199 221.5 Z" fill="url(#ring)"/>
<path d="M1095.7 286 Q1102 284 1108 285 L1109.5 301 Q1103 303 1097 302 Z" fill="url(#ring)"/>
<path d="M1206.4 293 Q1215 291 1224 292.3 L1225.5 311 Q1216 313 1207.5 312 Z" fill="url(#ring)"/>
<path d="M1225.3 459 Q1234 457 1243 458.5 L1244 476.5 Q1235 478 1226 477 Z" fill="url(#ring)"/>
<path d="M1241.3 597 Q1250 595 1258 596.4 L1259 614.5 Q1250 616 1242 615 Z" fill="url(#ring)"/>
<path d="M1124 445 Q1129 443 1133.5 444 L1133.5 453 Q1129 455 1124 454 Z" fill="#c0c0c0"/>
<!-- kinect -->
<path d="M1204.5 104 L1230 104 L1231 146 L1205 146 Z" fill="#2a2a2a"/>
<path d="M1057 104.9 L1069.8 99.2 L1222.8 96.1 L1230 105 L1227.5 103.8 L1211.3 111.9 L1212.1 103.3 L1057 106.3 Z" fill="#6a6a6a"/>
<rect x="1207" y="138" width="9" height="7" fill="#707070"/>
<path d="M1075 101.5 L1150 100 L1150 101.5 L1075 103 Z" fill="#7e7e7e"/>
<path d="M1052.1 119.1 L1057 106.3 L1212.1 103.3 L1204.5 116.1 L1205.5 139.7 L1058.5 139.7 L1053.5 131.9 Z" fill="#222"/>
<path d="M1052.1 119.1 L1057 106.3 L1059 108 L1055 120 L1056.5 132 L1058.5 139.7 L1053.5 131.9 Z" fill="#5a5a5a"/>
<ellipse cx="1071.5" cy="126" rx="8" ry="9.8" fill="#4a4a4a"/>
<path d="M1212.1 103.3 L1215 103.5 L1208 116.5 L1208.5 134.5 L1205.5 134.5 L1204.5 116.1 Z" fill="#6e6e6e"/>
<path d="M1211.3 111.9 L1227.5 103.8 L1229.2 123.8 L1212.1 134 Z" fill="#2c2c2c"/>
<path d="M1214 111 v21 M1217 109.5 v20.5 M1220 108 v19.5 M1223 106.5 v19 M1226 105 v18.5" stroke="#3e3e3e" stroke-width="0.9"/>
<path d="M1227.5 103.8 L1230 105 L1231 124 L1229.2 123.8 Z" fill="#5e5e5e"/>
<path d="M1059.2 141.8 L1213.8 144.7 L1213.8 156.1 L1059.2 154.6 Z" fill="#303030"/>
<path d="M1059.2 141.8 L1213.8 144.7 L1213.8 146 L1059.2 143.2 Z" fill="#3c3c3c"/>
<path d="M1059 154.6 L1074 154.6 L1074 165.5 L1059 165.5 Z" fill="#5e5e5e"/>
<path d="M1059 165.5 L1220 165.5 L1231.7 165.5 L1231.7 169 L1220.4 171 L1059 170.2 Z" fill="#686868"/>
<path d="M1217.3 130 Q1218 128 1221 128 L1231.7 128 L1231.7 169 L1222 171 L1217.3 165.5 Z" fill="#4c4c4c"/>
<path d="M1217.3 130 Q1218 128 1221 128 L1223 128 L1222 165.5 L1217.3 165.5 Z" fill="#727272"/>
<path d="M1136 166.5 h2 M1143 166.5 h2" stroke="#222" stroke-width="1.2"/>
<!-- gripper lower -->
<path d="M1108.4 630 L1139.2 630 L1139.2 649.7 L1108.4 645 Z" fill="#3c3c3c"/>
<path d="M1173.4 639.9 L1188.3 643.9 L1188.3 684.6 L1144.6 690.6 L1138.6 686.6 L1137.6 679.6 L1175 646 Z" fill="#2c2c2c"/>
<path d="M1175.4 653.8 L1184.3 649.8 L1184.3 678.6 L1153.5 682.6 Z" fill="#3e3e3e"/>
<path d="M1140 683 L1177 648 L1180 650 L1146 685 Z" fill="#2a2a2a"/>
<path d="M1118.9 710 L1139.2 697.7 L1155.2 703.9 L1153.9 718.6 L1137.9 731 L1118.9 726 Z" fill="#000"/>
<path d="M1103.5 630 L1103.5 648.5 L1109.6 667 L1111.5 685.4 L1112.7 703.9 L1109 722.3 L1104.7 733.4 L1115.8 735.9 L1120.7 716.2 L1120.7 685.4 L1120.7 660.8 L1120.7 630 Z" fill="#565656"/><path d="M1103.5 630 L1103.5 648.5 L1109.6 667 L1111.5 685.4 L1112.7 703.9 L1109 722.3 L1104.7 733.4 L1107 734 L1111 722.3 L1114.7 703.9 L1113.5 685.4 L1111.6 667 L1106 648.5 L1106 630 Z" fill="#6a6a6a"/>
<path d="M1151.5 630 L1151.5 660.8 L1145.3 681.7 L1151.5 698.9 L1151.5 716.2 L1146.6 740.8 L1136.7 744.5 L1139.2 716.2 L1140.4 691.6 L1136.7 673.1 L1134.2 648.5 L1134.2 630 Z" fill="#565656"/><path d="M1136.7 744.5 L1139.2 716.2 L1140.4 691.6 L1136.7 673.1 L1134.2 648.5 L1134.2 630 L1137 630 L1137 648.5 L1139.5 673.1 L1143 691.6 L1141.7 716.2 L1139 744 Z" fill="#6a6a6a"/>
<path d="M1090 668 L1100 662 L1106 668 L1096 677 Z" fill="#2a2a2a"/>
<path d="M1098 673 L1134 682 L1133 687 L1097 678 Z" fill="#262626"/>
<rect x="1094.9" y="668.5" width="11" height="11" rx="3" fill="#d8d8d8"/>
<rect x="1128.7" y="678" width="10" height="10" rx="3" fill="#d8d8d8"/>
<path d="M1112 731 L1132 736 L1131 741 L1112 736 Z" fill="#262626"/>
<rect x="1109" y="727.5" width="11" height="9.5" rx="3" fill="#d8d8d8"/>
<rect x="1126.9" y="733" width="8.6" height="9.6" rx="3" fill="#d8d8d8"/>
<path d="M1109 738 L1133 742 L1133 753 L1109 748 Z" fill="#2a2a2a"/>
<!-- gripper upper -->
<rect x="1117.5" y="453" width="13.2" height="69" fill="#656565"/>
<rect x="1124" y="453" width="6.7" height="69" fill="#585858"/>
<rect x="1130.7" y="456" width="14.3" height="68" fill="#626262"/>
<rect x="1138" y="456" width="7" height="68" fill="#555"/>
<path d="M1106.5 492.5 L1115 494.5 L1105 541.5 L1097.5 539 Z" fill="#6a6a6a"/>
<path d="M1104 493 L1120 494 L1120 499 L1104 498 Z" fill="#626262"/>
<path d="M1134.5 496 L1144 494.5 L1162 546 L1153 550 Z" fill="#6a6a6a"/>
<path d="M1130 494 L1147 500 L1146 505 L1130 499 Z" fill="#626262"/>
<path d="M1144 548 L1160 547 L1162 554 L1146 555 Z" fill="#707070"/>
<path d="M1112.7 532.8 L1116.5 522.4 L1130.7 520.5 L1140.2 524.3 L1145.9 546.1 L1138.3 563.2 L1122.2 565 L1108 549.9 Z" fill="#3e3e3e"/>
<path d="M1109 564 L1152.5 565 L1142 572 L1109 570 Z" fill="#0a0a7a"/>
<path d="M1109 570 L1142 572 L1142 595.4 L1109 591.6 Z" fill="#1616c8"/>
<path d="M1142 572 L1152.5 565 L1152.5 640 L1140.2 640 L1140.2 595 L1142 595 Z" fill="#4a4a4a"/>
<path d="M1109 591.6 L1140.2 595.4 L1140.2 640 L1109 640 Z" fill="#3c3c3c"/>
<g fill="#d0d0d0"><circle cx="1108.5" cy="496" r="2"/><circle cx="1119" cy="496" r="2"/><circle cx="1133" cy="496.5" r="2"/><circle cx="1144" cy="502.5" r="2"/><circle cx="1099.5" cy="539.5" r="2"/><circle cx="1119.4" cy="548" r="2"/><circle cx="1132.6" cy="550.8" r="2"/><circle cx="1153.5" cy="551.5" r="2"/></g>
</svg>
</body></html>
